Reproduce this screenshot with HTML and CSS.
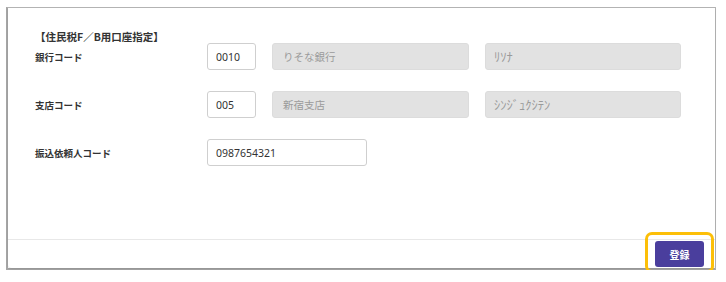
FILE: index.html
```html
<!DOCTYPE html>
<html lang="ja">
<head>
    <meta charset="UTF-8">
    <title>住民税口座指定</title>
    <link rel="stylesheet" href="styles.css">
</head>
<body>
    <div class="frame">
        <div class="card">
            <main class="content">
                <h2 class="heading">【住民税F／B用口座指定】</h2>
                <div class="form-grid">
                    <label class="label">銀行コード</label>
                    <input class="field" type="text" value="0010">
                    <div class="readonly">りそな銀行</div>
                    <div class="readonly kana">ﾘｿﾅ</div>

                    <label class="label">支店コード</label>
                    <input class="field" type="text" value="005">
                    <div class="readonly">新宿支店</div>
                    <div class="readonly kana">ｼﾝｼﾞｭｸｼﾃﾝ</div>

                    <label class="label">振込依頼人コード</label>
                    <input class="field wide" type="text" value="0987654321">
                </div>
            </main>
            <footer class="actions">
                <div class="btn-wrap">
                    <button class="submit-btn">登録</button>
                </div>
            </footer>
        </div>
    </div>
</body>
</html>
```

FILE: styles.css
```css
body {
    margin: 0;
    padding: 7px 0 0 6px;
    background-color: #fff;
    font-family: "Noto Sans CJK JP", "Noto Sans", sans-serif;
    color: #333;
}

.frame {
    width: 710px;
    box-sizing: border-box;
    border: 1px solid #b4b4b4;
    border-left: 2px solid #a6a6a6;
    border-bottom: 2px solid #a6a6a6;
}

.card {
    background-color: #fff;
    border-radius: 0 0 4px 4px;
    box-shadow: 0 1px 2px rgba(0, 0, 0, 0.12);
}

.content {
    height: 231px;
    box-sizing: border-box;
    padding: 23px 0 0 27px;
}

.heading {
    margin: 0;
    height: 12px;
    font-size: 10.5px;
    line-height: 12px;
    font-weight: 700;
    color: #333;
}

.form-grid {
    display: grid;
    grid-template-columns: 156px 49px 197px 196px;
    grid-auto-rows: 27px;
    column-gap: 16px;
    row-gap: 21px;
}

.label {
    display: flex;
    align-items: center;
    font-size: 9.5px;
    font-weight: 700;
    color: #333;
}

.field {
    box-sizing: border-box;
    width: 100%;
    height: 27px;
    margin: 0;
    padding: 0 8px;
    border: 1px solid #cfcfcf;
    border-radius: 3px;
    background-color: #fff;
    font-family: "Noto Sans", "Noto Sans CJK JP", sans-serif;
    font-size: 10.5px;
    color: #333;
}

.field.wide {
    grid-column: 2 / 4;
    width: 160px;
}

.readonly {
    display: flex;
    align-items: center;
    box-sizing: border-box;
    height: 27px;
    padding: 0 10px;
    border: 1px solid #dcdcdc;
    border-radius: 3px;
    background-color: #e2e2e2;
    font-size: 10.5px;
    color: #9a9a9a;
}

.readonly.kana {
    padding-left: 8px;
    font-size: 12.5px;
}

.actions {
    display: flex;
    justify-content: flex-end;
    align-items: center;
    height: 28px;
    padding-right: 11px;
    border-top: 1px solid #e8e8e8;
}

.btn-wrap {
    position: relative;
}

.btn-wrap::after {
    content: "";
    position: absolute;
    top: -9px;
    bottom: -6px;
    left: -10px;
    right: -10px;
    border: 3px solid #fcbf08;
    border-radius: 7px;
}

.submit-btn {
    display: block;
    width: 49px;
    height: 26px;
    padding: 0;
    border: none;
    border-radius: 3px;
    background-color: #4a3e9d;
    color: #fff;
    font-family: "Noto Sans CJK JP", sans-serif;
    font-size: 10px;
    font-weight: 700;
}
```
